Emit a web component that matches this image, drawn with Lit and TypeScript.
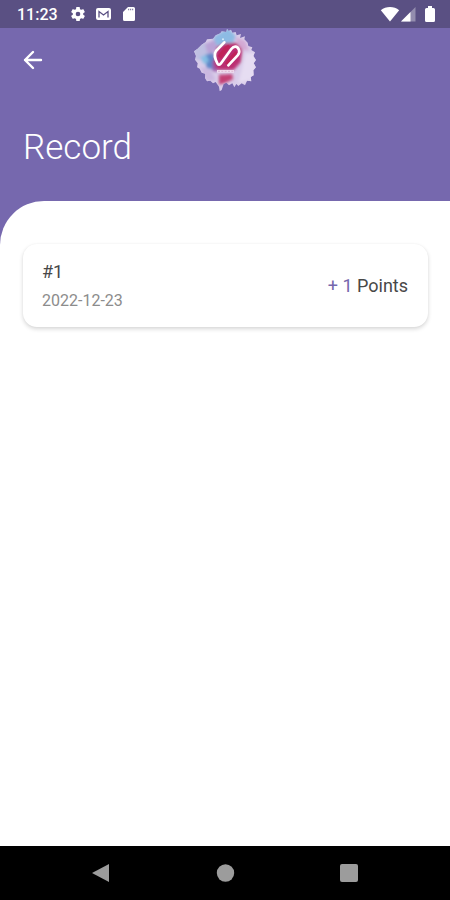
import { LitElement, html, css, svg } from "lit";
import { customElement, property } from "lit/decorators.js";

interface PointRecord {
  id: number;
  date: string;
  points: number;
}

@customElement("status-bar")
class StatusBar extends LitElement {
  static styles = css`
    :host {
      display: flex;
      align-items: center;
      justify-content: space-between;
      height: 28px;
      padding: 0 14px 0 17px;
      background: #5a5083;
      color: #fff;
    }
    .group {
      display: flex;
      align-items: center;
      gap: 9px;
    }
    .signals {
      gap: 1px;
    }
    .time {
      font-size: 16px;
      line-height: 20px;
      font-weight: 500;
      margin: 2px 3px 0 0;
    }
    svg {
      display: block;
      fill: currentColor;
    }
    .battery {
      margin-left: 7px;
    }
  `;
  render() {
    return html`
      <div class="group">
        <span class="time">11:23</span>
        <svg width="16" height="16" viewBox="1 1 22 22" aria-hidden="true">
          <path d="M19.14 12.94c.04-.3.06-.61.06-.94s-.02-.64-.07-.94l2.03-1.58a.49.49 0 0 0 .12-.61l-1.92-3.32a.49.49 0 0 0-.59-.22l-2.39.96a7 7 0 0 0-1.62-.94l-.36-2.54a.48.48 0 0 0-.48-.41h-3.84a.47.47 0 0 0-.47.41l-.36 2.54c-.59.24-1.13.57-1.62.94l-2.39-.96a.48.48 0 0 0-.59.22L2.74 8.87a.47.47 0 0 0 .12.61l2.03 1.58a7 7 0 0 0 0 1.88l-2.03 1.58a.49.49 0 0 0-.12.61l1.92 3.32c.12.22.37.29.59.22l2.39-.96c.5.38 1.03.7 1.62.94l.36 2.54c.05.24.24.41.48.41h3.84c.24 0 .44-.17.47-.41l.36-2.54a7 7 0 0 0 1.62-.94l2.39.96c.22.08.47 0 .59-.22l1.92-3.32a.47.47 0 0 0-.12-.61zM12 15.200a3.200 3.200 0 1 1 0-6.400 3.200 3.200 0 0 1 0 6.400z" />
        </svg>
        <svg width="17" height="14" viewBox="0 0 17 14" aria-hidden="true">
          <rect x="1" y="1" width="15" height="12" rx="2" />
          <path d="M4 10.500V4.500L8.500 8 13 4.500v6" fill="none" stroke="#5a5083" stroke-width="1.300" />
        </svg>
        <svg width="16" height="16" viewBox="0 0 16 16" aria-hidden="true">
          <path d="M7 1h5.500A1.500 1.500 0 0 1 14 2.500v11a1.500 1.500 0 0 1-1.500 1.500h-9A1.500 1.500 0 0 1 2 13.500V6z" />
          <path d="M7 3.500h5.500" stroke="#5a5083" stroke-width="1.500" stroke-dasharray="1.200 .8" opacity=".7" />
        </svg>
      </div>
      <div class="group signals">
        <svg width="20" height="16" viewBox="0 0 20 16" aria-hidden="true">
          <path d="M10 15.500 .8 4.200Q4.800 1 10 1t9.200 3.200z" />
        </svg>
        <svg width="15" height="16" viewBox="0 0 15 16" aria-hidden="true">
          <path opacity=".35" d="M0 15.500 14.500 1v14.500z" />
          <path d="M0 15.500 9.500 6v9.500z" />
        </svg>
        <svg class="battery" width="12" height="18" viewBox="0 0 12 18" aria-hidden="true">
          <path d="M4 1h4v2h1.500A1.500 1.500 0 0 1 11 4.500v11A1.500 1.500 0 0 1 9.500 17h-7A1.500 1.500 0 0 1 1 15.500v-11A1.500 1.500 0 0 1 2.500 3H4z" />
        </svg>
      </div>
    `;
  }
}

@customElement("brand-logo")
class BrandLogo extends LitElement {
  static styles = css`
    :host,
    svg {
      display: block;
    }
  `;
  private splash = svg`<path d="M27 94 38 86 50 74 62 66 66 58 84 56 92 46 106 40 110 34 124 36 126 26 131 33 138 29 142 38 152 36 155 46 168 42 165 54 180 49 178 58 188 68 190 78 202 82 199 90 210 97 205 108 213 120 206 130 213 142 205 151 206 166 197 171 199 184 186 182 180 196 170 190 160 198 154 192 148 202 142 190 132 196 124 188 116 192 110 210 104 214 102 200 92 186 84 190 76 182 66 184 60 174 61 161 50 158 44 146 36 142 38 130 30 119 33 108z"/>`;
  render() {
    return html`
      <svg width="64" height="64" viewBox="24 24 192 192" role="img" aria-label="Logo">
        <defs>
          <clipPath id="edge">${this.splash}</clipPath>
          <filter id="wash" x="-30%" y="-30%" width="160%" height="160%">
            <feGaussianBlur stdDeviation="4" />
          </filter>
        </defs>
        <g clip-path="url(#edge)">
          <rect x="24" y="24" width="192" height="192" fill="#d9cdea" />
          <g filter="url(#wash)">
            <path fill="#bfc0e2" d="M24 75 60 66 84 100 62 120 31 120z" />
            <path fill="#8dbbe4" d="M86 50 130 24 152 48 146 66 110 78 88 76z" />
            <path fill="#b9a2d6" d="M60 72 88 60 98 84 80 102 66 96z" />
            <path fill="#5f87c8" d="M60 104 84 98 94 124 84 148 65 144z" />
            <path fill="#85bfe4" d="M46 110 64 106 72 124 56 132z" />
            <path fill="#d3a9d4" d="M150 52 180 62 192 92 166 88z" />
            <path fill="#e6ddf2" d="M182 100 214 100 210 178 160 190 170 150z" />
            <path fill="#9a5cab" d="M82 122 100 130 96 156 82 152z" />
            <path fill="#bb2f72" d="M96 80 118 70 154 68 172 90 168 126 146 150 98 150 86 128z" />
            <path fill="#c33f74" d="M102 164 142 162 144 178 122 188 102 194z" />
            <path fill="#cbb8e0" d="M46 140 78 150 92 181 64 184z" />
          </g>
          <path fill="#c21f50" opacity=".7" d="M118 80 130 74 136 80 108 116 98 108zM150 94l6 2-4 14-22 22-10 0 8-14z" />
        </g>
        <path fill="none" stroke="#fff" stroke-width="8" stroke-linecap="round" stroke-linejoin="round" d="M118 67 93 93C85 104 90 116 97 130Q101 138 107 131L139 87C148 75 158 79 162 90Q165 98 158 106L130 136" />
        <circle cx="114" cy="58" r="3" fill="#d9ecfa" />
        <path fill="none" stroke="#f4e8f3" stroke-width="8" opacity=".85" d="M96 154h51" />
        <path fill="none" stroke="#c47aa9" stroke-width="3" stroke-dasharray="6 4" opacity=".4" d="M99 154h46" />
      </svg>
    `;
  }
}

@customElement("record-card")
class RecordCard extends LitElement {
  @property({ attribute: false }) record!: PointRecord;
  static styles = css`
    :host {
      display: flex;
      align-items: center;
      justify-content: space-between;
      padding: 16px 20px 15px 19px;
      border-radius: 14px;
      background: #fff;
      box-shadow: 0 2px 4px rgba(0, 0, 0, 0.16), 0 0 2px rgba(0, 0, 0, 0.04);
    }
    .details {
      display: grid;
      gap: 6px;
    }
    .number,
    .points {
      font-size: 18px;
      line-height: 24px;
      color: #484848;
    }
    .date {
      font-size: 16px;
      line-height: 22px;
      color: #8c8c8c;
    }
    .gain {
      color: #7567ad;
    }
  `;
  render() {
    return html`
      <div class="details">
        <span class="number">#${this.record.id}</span>
        <time class="date" datetime=${this.record.date}>${this.record.date}</time>
      </div>
      <span class="points"><span class="gain">+ ${this.record.points}</span> Points</span>
    `;
  }
}

@customElement("nav-bar")
class NavBar extends LitElement {
  static styles = css`
    :host {
      display: flex;
      justify-content: center;
      height: 54px;
      background: #000;
    }
    button {
      display: grid;
      place-items: center;
      width: 124px;
      padding: 0;
      border: 0;
      background: none;
      color: #9c9c9c;
    }
    svg {
      fill: currentColor;
    }
  `;
  render() {
    return html`
      <button type="button" aria-label="Back">
        <svg width="20" height="20" viewBox="0 0 20 20"><path d="M18 1v18L1 10z" /></svg>
      </button>
      <button type="button" aria-label="Home">
        <svg width="20" height="20" viewBox="0 0 20 20"><circle cx="10.500" cy="10" r="8.700" /></svg>
      </button>
      <button type="button" aria-label="Recent apps">
        <svg width="20" height="20" viewBox="0 0 20 20"><rect x="1" y="1" width="18" height="18" rx="2" /></svg>
      </button>
    `;
  }
}

@customElement("app-root")
class AppRoot extends LitElement {
  private records: PointRecord[] = [{ id: 1, date: "2022-12-23", points: 1 }];
  static styles = css`
    :host {
      display: flex;
      flex-direction: column;
      min-height: 100vh;
      background: #7668ae;
      font-family: Roboto, "Liberation Sans", sans-serif;
    }
    .bar {
      display: grid;
      grid-template-columns: 1fr auto 1fr;
      align-items: center;
      height: 64px;
      padding: 0 17px;
    }
    .back {
      display: grid;
      place-items: center;
      width: 32px;
      height: 32px;
      padding: 0;
      border: 0;
      background: none;
      color: #fff;
    }
    h1 {
      margin: 0;
      padding: 34px 23px 31px;
      font-size: 35px;
      line-height: 44px;
      font-weight: 300;
      color: #fff;
    }
    main {
      flex: 1;
      padding: 43px 22px 24px 23px;
      border-top-left-radius: 44px;
      background: #fff;
    }
    ul {
      display: grid;
      gap: 16px;
      margin: 0;
      padding: 0;
      list-style: none;
    }
  `;
  render() {
    return html`
      <status-bar></status-bar>
      <header>
        <div class="bar">
          <button class="back" type="button" aria-label="Go back">
            <svg width="20" height="20" viewBox="0 0 20 20" fill="none" stroke="currentColor" stroke-width="2.400">
              <path stroke-linecap="round" stroke-linejoin="round" d="M18 10H2m8-8-8 8 8 8" />
            </svg>
          </button>
          <brand-logo></brand-logo>
        </div>
        <h1>Record</h1>
      </header>
      <main>
        <ul>
          ${this.records.map((record) => html`<li><record-card .record=${record}></record-card></li>`)}
        </ul>
      </main>
      <nav-bar></nav-bar>
    `;
  }
}
